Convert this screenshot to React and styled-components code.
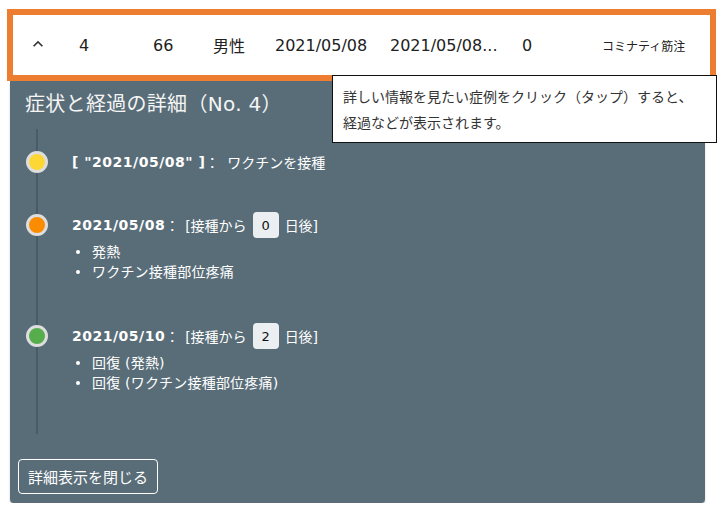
import styled, { createGlobalStyle } from "styled-components";

const GlobalStyle = createGlobalStyle`
  body {
    margin: 0;
    background: #ffffff;
    font-family: "DejaVu Sans", "Noto Sans CJK JP", sans-serif;
  }
`;

const Page = styled.div`
  position: relative;
  width: 724px;
  padding: 9px 0 0 7px;
  box-sizing: border-box;
`;

// 選択中の行
const Row = styled.div`
  width: 709px;
  height: 72px;
  box-sizing: border-box;
  border: 6px solid #ed7d31;
  padding-left: 15px;
  display: grid;
  grid-template-columns: 51px 74px 60px 62px 115px 132px 80px 1fr;
  align-items: center;
  font-size: 16px;
  color: #212121;
`;

const Cell = styled.div`
  white-space: nowrap;
  font-size: ${(p) => (p.small ? "12px" : "16px")};
  font-family: ${(p) =>
    p.cjk ? '"Noto Sans CJK JP", sans-serif' : "inherit"};
`;

const Chevron = styled.svg`
  width: 20px;
  height: 20px;
  display: block;
  fill: #333;
  margin-top: -2px;
`;

// 詳細パネル
const Panel = styled.div`
  margin-left: 3px;
  width: 695px;
  background: #596d78;
  border-radius: 0 0 4px 4px;
  box-shadow: 0 2px 2px rgba(0, 0, 0, 0.22);
  padding-bottom: 9px;
  color: #ffffff;
`;

const Title = styled.h2`
  margin: 0;
  padding: 10px 15px 0;
  font-size: 20px;
  line-height: 26px;
  font-weight: normal;
  color: #f5f5f5;
  letter-spacing: 0.3px;
`;

const Timeline = styled.div`
  margin: 12px 0 0 26px;
  border-left: 2px solid #485b66;
  padding-top: 20px;
`;

const Entry = styled.div`
  display: grid;
  grid-template-columns: 22px 1fr;
  column-gap: 24px;
  margin-left: -12px;
  padding-bottom: 37px;
`;

const Dot = styled.span`
  width: 22px;
  height: 22px;
  box-sizing: border-box;
  margin-top: 2px;
  border: 3px solid #dedede;
  border-radius: 50%;
  background: ${(p) => p.color};
`;

const Head = styled.div`
  display: flex;
  align-items: center;
  height: 26px;
  font-size: 14px;
  white-space: nowrap;
`;

const Strong = styled.b`
  font-weight: bold;
  letter-spacing: 0.5px;
`;

const Sep = styled.span`
  margin-right: ${(p) => p.gap || 2}px;
`;

const Chip = styled.span`
  flex: 0 0 26px;
  width: 26px;
  height: 26px;
  margin: 0 6px;
  border-radius: 4px;
  background: #eceff1;
  color: #111;
  font-size: 13px;
  display: inline-flex;
  align-items: center;
  justify-content: center;
`;

const Items = styled.ul`
  grid-column: 2;
  list-style: none;
  margin: 4px 0 4px;
  padding: 0;
`;

const Item = styled.li`
  display: flex;
  align-items: center;
  font-size: 14px;
  line-height: 20px;
  letter-spacing: 0.2px;
  &::before {
    content: "";
    width: 4px;
    height: 4px;
    border-radius: 50%;
    background: #fff;
    margin: 0 12px 0 4px;
  }
`;

const Footer = styled.div`
  padding: 25px 0 0 8px;
`;

const CloseButton = styled.button`
  height: 35px;
  padding: 0 9px;
  border: 1px solid #ffffff;
  border-radius: 4px;
  background: transparent;
  color: #ffffff;
  font-family: "Noto Sans CJK JP", sans-serif;
  font-size: 15px;
`;

// ヒント
const Tooltip = styled.div`
  position: absolute;
  left: 332px;
  top: 75px;
  width: 385px;
  box-sizing: border-box;
  border: 1px solid #111;
  background: #fff;
  padding: 7px 10px;
  font-family: "Noto Sans CJK JP", sans-serif;
  font-size: 14px;
  line-height: 26px;
  color: #333;
  white-space: nowrap;
`;

const events = [
  {
    color: "#fdd835",
    head: (
      <>
        <Strong>[ "2021/05/08" ]</Strong>
        <Sep gap={8}>：</Sep>
        ワクチンを接種
      </>
    ),
    items: [],
  },
  {
    color: "#fb8c00",
    head: (
      <>
        <Strong>2021/05/08</Strong>
        <Sep gap={6}>：</Sep>[接種から<Chip>0</Chip>日後]
      </>
    ),
    items: ["発熱", "ワクチン接種部位疼痛"],
  },
  {
    color: "#55ad4c",
    head: (
      <>
        <Strong>2021/05/10</Strong>
        <Sep gap={6}>：</Sep>[接種から<Chip>2</Chip>日後]
      </>
    ),
    items: ["回復 (発熱)", "回復 (ワクチン接種部位疼痛)"],
  },
];

export default function App() {
  return (
    <>
      <GlobalStyle />
      <Page>
        <Row>
          <Cell>
            <Chevron viewBox="0 0 24 24">
              <path d="M7.41 15.41 12 10.83l4.59 4.58L18 14l-6-6-6 6z" />
            </Chevron>
          </Cell>
          <Cell>4</Cell>
          <Cell>66</Cell>
          <Cell>男性</Cell>
          <Cell>2021/05/08</Cell>
          <Cell>2021/05/08...</Cell>
          <Cell>0</Cell>
          <Cell small cjk>
            コミナティ筋注
          </Cell>
        </Row>
        <Panel>
          <Title>症状と経過の詳細（No. 4）</Title>
          <Timeline>
            {events.map((e, i) => (
              <Entry key={i}>
                <Dot color={e.color} />
                <Head>{e.head}</Head>
                {e.items.length > 0 && (
                  <Items>
                    {e.items.map((t) => (
                      <Item key={t}>{t}</Item>
                    ))}
                  </Items>
                )}
              </Entry>
            ))}
          </Timeline>
          <Footer>
            <CloseButton>詳細表示を閉じる</CloseButton>
          </Footer>
        </Panel>
        <Tooltip>
          詳しい情報を見たい症例をクリック（タップ）すると、
          <br />
          経過などが表示されます。
        </Tooltip>
      </Page>
    </>
  );
}
